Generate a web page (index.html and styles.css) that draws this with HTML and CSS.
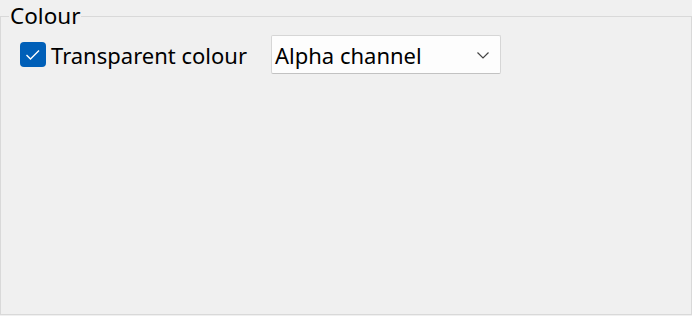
FILE: index.html
```html
<!DOCTYPE html>
<html lang="en">
<head>
  <meta charset="UTF-8" />
  <title>Colour</title>
  <link rel="stylesheet" href="styles.css">
</head>
<body>
  <fieldset class="group">
    <legend>Colour</legend>
    <div class="row">
      <label class="check">
        <span class="box">
          <svg width="18" height="16" viewBox="0 0 18 16"><path d="M2.5 8 L6.5 12 L15 3.5" fill="none" stroke="#fff" stroke-width="1.4"/></svg>
        </span>
        <span>Transparent colour</span>
      </label>
      <div class="select">
        <span>Alpha channel</span>
        <svg width="14" height="10" viewBox="0 0 14 10"><path d="M1.5 2.5 L7 8 L12.5 2.5" fill="none" stroke="#444" stroke-width="1.2"/></svg>
      </div>
    </div>
  </fieldset>
</body>
</html>
```
FILE: styles.css
```css
html, body {
  margin: 0;
  padding: 0;
  background: #f0f0f0;
}
body {
  font-family: "Noto Sans", "Open Sans", sans-serif;
  color: #000;
  width: 692px;
  height: 316px;
  overflow: hidden;
}
.group {
  margin: 1px 0 0 0;
  padding: 0 0 0 19px;
  border: 1px solid #d9d9d9;
  height: 314px;
  box-sizing: border-box;
}
.group legend {
  font-size: 22.5px;
  line-height: 30px;
  padding: 0 1px;
  margin-left: -11px;
}
.row {
  display: flex;
  align-items: center;
  gap: 24px;
  margin-top: 4px;
}
.check {
  display: flex;
  align-items: center;
  gap: 5px;
  font-size: 22px;
}
.box {
  width: 26px;
  height: 25px;
  border-radius: 4px;
  background: #005fb8;
  display: flex;
  align-items: center;
  justify-content: center;
}
.select {
  width: 230px;
  height: 39px;
  box-sizing: border-box;
  background: #fdfdfd;
  border: 1px solid #d6d6d6;
  border-bottom-color: #c2c2c2;
  border-radius: 2px;
  display: flex;
  align-items: center;
  justify-content: space-between;
  padding: 0 10px 0 3px;
  font-size: 22px;
}
```
